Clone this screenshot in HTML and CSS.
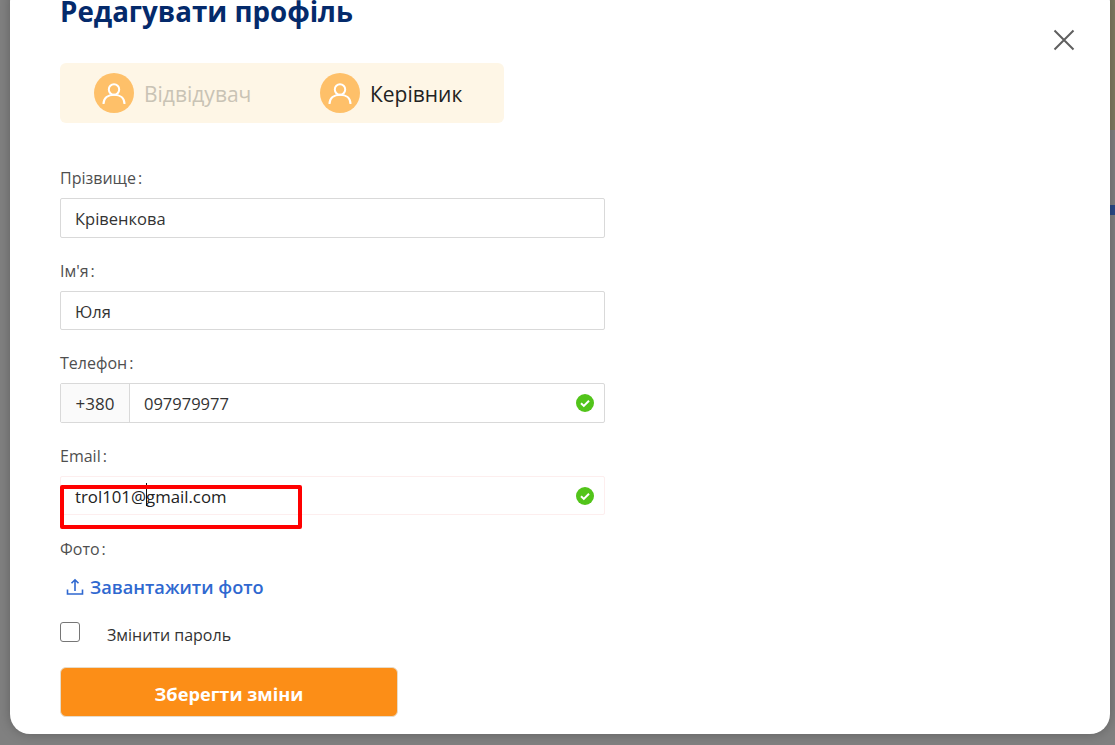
FILE: index.html
```html
<!DOCTYPE html>
<html lang="uk">
<head>
    <meta charset="UTF-8">
    <title>Редагувати профіль</title>
    <link rel="stylesheet" href="styles.css">
</head>
<body>
    <div class="backdrop">
        <div class="side-strip"><span class="side-top"></span><span class="side-mark"></span></div>
        <div class="modal">
            <svg class="close" width="22" height="22" viewBox="0 0 22 22"><path d="M1.5 1.5l19 19M20.5 1.5l-19 19" fill="none" stroke="#5f5f5f" stroke-width="2"/></svg>
            <h2 class="title">Редагувати профіль</h2>

            <div class="roles">
                <div class="role role-off">
                    <span class="avatar"><svg width="24" height="24" viewBox="0 0 24 24"><circle cx="12" cy="8.5" r="5.2"/><path d="M1.500 23c0-6 4.500-9.300 10.500-9.300s10.500 3.300 10.500 9.300"/></svg></span>
                    <span class="role-name">Відвідувач</span>
                </div>
                <div class="role">
                    <span class="avatar"><svg width="24" height="24" viewBox="0 0 24 24"><circle cx="12" cy="8.5" r="5.2"/><path d="M1.500 23c0-6 4.500-9.300 10.500-9.300s10.500 3.300 10.500 9.300"/></svg></span>
                    <span class="role-name">Керівник</span>
                </div>
            </div>

            <div class="form">
                <label class="lbl">Прізвище<span class="colon">:</span></label>
                <div class="field">Крівенкова</div>

                <label class="lbl">Ім'я<span class="colon">:</span></label>
                <div class="field field-name">Юля</div>

                <label class="lbl">Телефон<span class="colon">:</span></label>
                <div class="field field-phone">
                    <span class="prefix">+380</span>
                    <span class="phone">097979977</span>
                    <svg class="ok" width="18" height="18" viewBox="0 0 18 18"><circle cx="9" cy="9" r="9" fill="#52c41a"/><path d="M5 9.300l2.800 2.600L13 6.700" fill="none" stroke="#fff" stroke-width="2"/></svg>
                </div>

                <label class="lbl">Email<span class="colon">:</span></label>
                <div class="field field-mail">
                    <span class="mail">trol101@<i class="caret"></i>gmail.com</span>
                    <svg class="ok" width="18" height="18" viewBox="0 0 18 18"><circle cx="9" cy="9" r="9" fill="#52c41a"/><path d="M5 9.300l2.800 2.600L13 6.700" fill="none" stroke="#fff" stroke-width="2"/></svg>
                    <span class="red-box"></span>
                </div>

                <label class="lbl lbl-photo">Фото<span class="colon">:</span></label>
                <div class="upload">
                    <svg width="18" height="18" viewBox="0 0 18 18"><path d="M1.500 11.500v4.500h15v-4.500M9 13V2M5.500 5.300L9 1.800l3.500 3.500" fill="none" stroke="#2f68d0" stroke-width="1.600"/></svg>
                    <span>Завантажити фото</span>
                </div>

                <div class="check-row">
                    <span class="check"></span>
                    <span>Змінити пароль</span>
                </div>

                <button class="save">Зберегти зміни</button>
            </div>
        </div>
    </div>
</body>
</html>
```

FILE: styles.css
```css
html, body {
    margin: 0;
    height: 100%;
    overflow: hidden;
}
body {
    font-family: "Open Sans", "Noto Sans", sans-serif;
    color: #222;
    background: #808080;
}
.backdrop {
    position: relative;
    height: 745px;
    padding: 0 5px 0 10px;
    box-sizing: border-box;
    overflow: hidden;
}
.side-strip {
    position: absolute;
    top: 0;
    right: 0;
    width: 5px;
    height: 100%;
}
.side-top {
    display: block;
    height: 130px;
    background: #7f7b61;
}
.side-mark {
    display: block;
    margin-top: 75px;
    height: 10px;
    background: #2a4a86;
}
.modal {
    position: relative;
    height: 752px;
    margin-top: -18px;
    padding: 0 50px;
    box-sizing: border-box;
    background: #fff;
    border-radius: 20px;
    box-shadow: 0 0 12px rgba(0, 0, 0, 0.25);
}
.close {
    position: absolute;
    top: 47px;
    right: 35px;
}
.title {
    margin: 0;
    padding-top: 9px;
    font-size: 27.7px;
    line-height: 40px;
    font-weight: 700;
    color: #042a6b;
}
.roles {
    display: flex;
    align-items: center;
    width: 444px;
    height: 60px;
    margin-top: 32px;
    padding-left: 34px;
    box-sizing: border-box;
    background: #fef6e6;
    border-radius: 6px;
    font-size: 21px;
}
.role {
    display: flex;
    align-items: center;
    gap: 10px;
    width: 226px;
    flex: none;
}
.role-name {
    padding-top: 2px;
}
.role-off {
    color: #c9c3b5;
}
.avatar {
    display: flex;
    align-items: center;
    justify-content: center;
    width: 40px;
    height: 40px;
    border-radius: 50%;
    background: #fec069;
}
.avatar svg {
    fill: none;
    stroke: #fff;
    stroke-width: 2;
}
.form {
    width: 545px;
    margin-top: 44px;
    font-size: 16.5px;
}
.lbl {
    display: block;
    height: 23px;
    line-height: 23px;
    margin-bottom: 8px;
    font-size: 16px;
    color: #4f4f4f;
}
.colon {
    margin-left: 2px;
}
.field {
    position: relative;
    display: flex;
    align-items: center;
    height: 40px;
    margin-bottom: 22px;
    padding-left: 14px;
    box-sizing: border-box;
    border: 1px solid #d9d9d9;
    border-radius: 2px;
    color: #333;
}
.field-name {
    height: 39px;
    padding-top: 2px;
}
.field-phone {
    padding-left: 0;
}
.prefix {
    display: flex;
    align-items: center;
    justify-content: center;
    width: 68px;
    height: 100%;
    font-size: 17px;
    background: #fafafa;
    border-right: 1px solid #d9d9d9;
}
.phone {
    margin-left: 14px;
}
.ok {
    position: absolute;
    right: 10px;
    top: 50%;
    margin-top: -9px;
}
.field-mail {
    height: 39px;
    margin-bottom: 23px;
    border-color: #fdeeee;
    color: #222;
}
.mail {
    position: relative;
    top: 2px;
    font-size: 16.8px;
}
.caret {
    position: relative;
    top: -4px;
    display: inline-block;
    width: 1px;
    height: 23px;
    margin-right: -1px;
    vertical-align: -7px;
    background: #111;
}
.red-box {
    position: absolute;
    left: -1px;
    top: 8px;
    width: 242px;
    height: 44px;
    box-sizing: border-box;
    border: 4px solid #f00;
    border-radius: 2px;
}
.lbl-photo {
    margin-bottom: 12px;
}
.upload {
    display: flex;
    align-items: center;
    gap: 6px;
    height: 28px;
    padding-left: 6px;
    font-size: 18.2px;
    font-weight: 600;
    color: #2f68d0;
}
.check-row {
    display: flex;
    align-items: center;
    margin-top: 22px;
    height: 24px;
    gap: 27px;
    font-size: 16px;
    color: #333;
}
.check {
    width: 18px;
    height: 18px;
    border: 1px solid #767676;
    border-radius: 3px;
    margin-top: -6px;
}
.save {
    display: block;
    width: 338px;
    height: 50px;
    margin-top: 20px;
    padding-top: 5px;
    border: 1px solid #e6dccb;
    border-radius: 6px;
    background: #fc8e17;
    color: #fff;
    font-family: inherit;
    font-size: 18.2px;
    font-weight: 700;
}
```
